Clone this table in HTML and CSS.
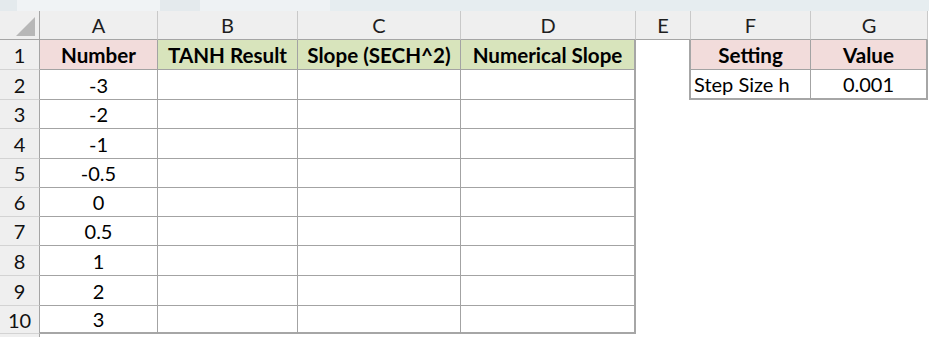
FILE: index.html
```html
<!DOCTYPE html>
<html>
<head>
<meta charset="utf-8">
<link rel="stylesheet" href="styles.css">
</head>
<body>
<div class="topstrip">
  <div class="seg s1"></div>
  <div class="seg s2"></div>
  <div class="seg s3"></div>
  <div class="seg s4"></div>
  <div class="seg s5"></div>
</div>
<div class="sheet">
  <div class="corner"><svg width="19" height="19" viewBox="0 0 19 19"><polygon points="19,0 19,19 0,19" fill="#b7b7b7"/></svg></div>
  <div class="ch">A</div><div class="ch">B</div><div class="ch">C</div><div class="ch">D</div><div class="ch">E</div><div class="ch">F</div><div class="ch">G</div>

  <div class="rh">1</div>
  <div class="c t hd pink">Number</div>
  <div class="c t hd green">TANH Result</div>
  <div class="c t hd green">Slope (SECH^2)</div>
  <div class="c t hd green rt">Numerical Slope</div>
  <div class="c e edge"></div>
  <div class="c t hd pink">Setting</div>
  <div class="c t hd pink rt">Value</div>

  <div class="rh">2</div>
  <div class="c t">-3</div><div class="c t"></div><div class="c t"></div><div class="c t rt"></div>
  <div class="c e edge"></div>
  <div class="c t left bt">Step Size h</div>
  <div class="c t rt bt">0.001</div>

  <div class="rh">3</div>
  <div class="c t">-2</div><div class="c t"></div><div class="c t"></div><div class="c t rt"></div><div class="c e"></div><div class="c e"></div><div class="c e"></div>

  <div class="rh">4</div>
  <div class="c t">-1</div><div class="c t"></div><div class="c t"></div><div class="c t rt"></div><div class="c e"></div><div class="c e"></div><div class="c e"></div>

  <div class="rh">5</div>
  <div class="c t">-0.5</div><div class="c t"></div><div class="c t"></div><div class="c t rt"></div><div class="c e"></div><div class="c e"></div><div class="c e"></div>

  <div class="rh">6</div>
  <div class="c t">0</div><div class="c t"></div><div class="c t"></div><div class="c t rt"></div><div class="c e"></div><div class="c e"></div><div class="c e"></div>

  <div class="rh">7</div>
  <div class="c t">0.5</div><div class="c t"></div><div class="c t"></div><div class="c t rt"></div><div class="c e"></div><div class="c e"></div><div class="c e"></div>

  <div class="rh">8</div>
  <div class="c t">1</div><div class="c t"></div><div class="c t"></div><div class="c t rt"></div><div class="c e"></div><div class="c e"></div><div class="c e"></div>

  <div class="rh">9</div>
  <div class="c t">2</div><div class="c t"></div><div class="c t"></div><div class="c t rt"></div><div class="c e"></div><div class="c e"></div><div class="c e"></div>

  <div class="rh">10</div>
  <div class="c t bt">3</div><div class="c t bt"></div><div class="c t bt"></div><div class="c t rt bt"></div><div class="c e"></div><div class="c e"></div><div class="c e"></div>

  <div class="rh last"></div>
  <div class="c e"></div><div class="c e"></div><div class="c e"></div><div class="c e"></div><div class="c e"></div><div class="c e"></div><div class="c e"></div>
</div>
</body>
</html>
```
FILE: styles.css
```css
html, body {
  margin: 0;
  padding: 0;
  background: #ffffff;
  width: 929px;
  height: 337px;
  overflow: hidden;
}

body {
  font-family: Lato, "Open Sans", sans-serif;
  font-size: 20px;
  color: #000;
}

.topstrip {
  display: flex;
  height: 11px;
  background: #e4ebee;
}

.seg { height: 100%; }
.s1 { width: 17px; background: #e4eaed; }
.s2 { width: 143px; background: #f0f3f5; }
.s3 { width: 40px; background: #e4eaed; }
.s4 { width: 130px; background: #eef2f4; }
.s5 { flex: 1; background: #e6edf0; }

.sheet {
  display: grid;
  grid-template-columns: 40px 118px 140px 163px 175px 55px 120px 117px;
  grid-template-rows: 29px 30px 30px 29px 30px 29px 29px 29px 30px 30px 28px 3px;
  height: 326px;
  overflow: hidden;
}

.corner {
  background: #efefef;
  border-right: 1px solid #a5a5a5;
  border-bottom: 1px solid #a5a5a5;
  display: flex;
  align-items: flex-end;
  justify-content: flex-end;
  padding: 0 4px 3px 0;
}

.corner svg { display: block; }

.ch {
  background: #efefef;
  border-right: 1px solid #c9c9c9;
  border-bottom: 1px solid #a5a5a5;
  display: flex;
  align-items: center;
  justify-content: center;
  color: #1e1e1e;
}

.rh {
  background: #efefef;
  border-right: 1px solid #a5a5a5;
  border-bottom: 1px solid #d3d3d3;
  display: flex;
  align-items: center;
  justify-content: center;
  color: #111;
}

.rh.last { border-bottom: none; }

.c {
  display: flex;
  align-items: center;
  justify-content: center;
  white-space: nowrap;
  overflow: hidden;
}

.t {
  border-right: 1px solid #a3a3a3;
  border-bottom: 1px solid #a3a3a3;
}

.rt { border-right: 2px solid #a6a6a6; }
.bt { border-bottom: 2px solid #a6a6a6; }

.e { background: #fff; }

.edge { border-right: 2px solid #a6a6a6; }

.hd {
  font-weight: 700;
  font-size: 20.6px;
}

.pink { background: #f2dcdb; }
.green { background: #d8e4bc; }

.left {
  justify-content: flex-start;
  padding-left: 3px;
}
```
